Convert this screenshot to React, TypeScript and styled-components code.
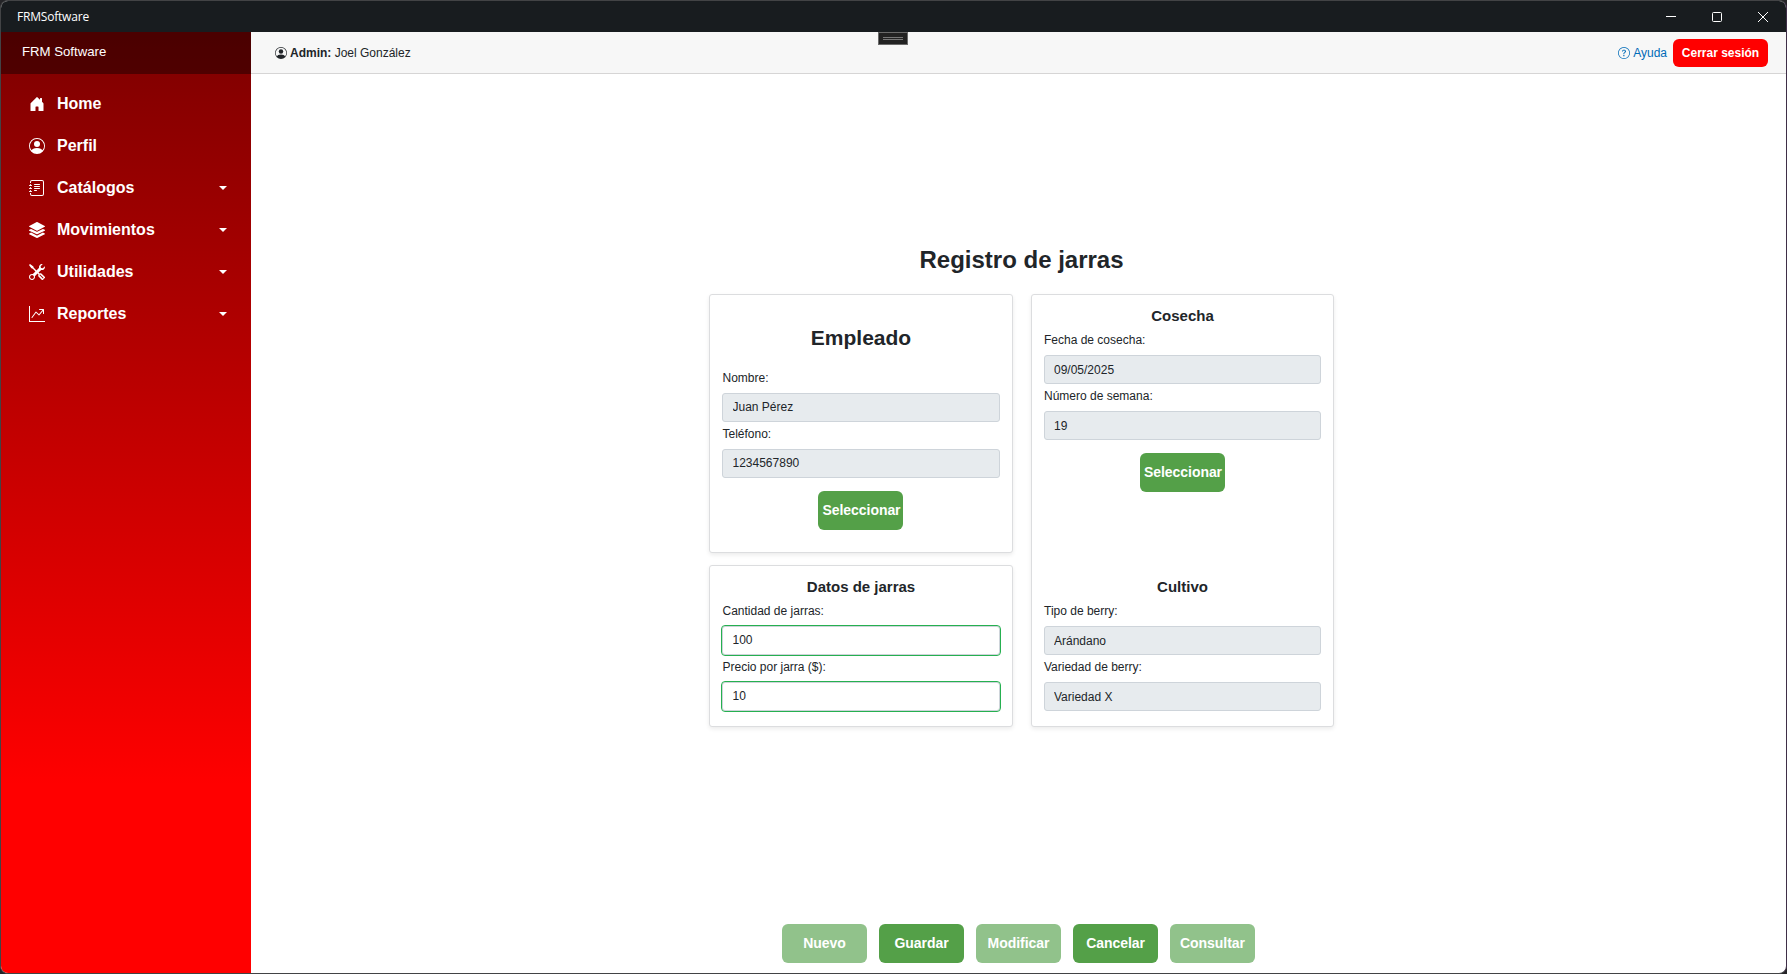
import React from "react";
import styled, { createGlobalStyle, css } from "styled-components";
import {
  BsHouseDoorFill,
  BsPersonCircle,
  BsJournalText,
  BsTools,
  BsGraphUpArrow,
  BsQuestionCircle,
} from "react-icons/bs";

const Global = createGlobalStyle`
  *, *::before, *::after { box-sizing: border-box; }
  html, body { margin: 0; height: 100%; overflow: hidden; background: #242427; }
  body { font: 12px/18px "Liberation Sans", Arial, sans-serif; color: #212529; }
  h1, h2, h3, p { margin: 0; }
  button, input { font-family: inherit; }
`;

const Window = styled.div`
  width: 100vw;
  height: 100vh;
  display: flex;
  flex-direction: column;
  border: 1px solid #424345;
  border-right-color: #3f2f48;
  border-radius: 8px;
  overflow: hidden;
  background: #fff;
`;

const TitleBar = styled.header`
  position: relative;
  flex: 0 0 31px;
  display: flex;
  align-items: center;
  justify-content: space-between;
  padding-left: 16px;
  background: #181c1f;
  color: #fff;
  font: 12px/16px "Open Sans", "Noto Sans", sans-serif;
`;

const AppTitle = styled.span`
  letter-spacing: -0.2px;
`;

const WindowControls = styled.div`
  display: flex;
  height: 100%;
`;

const ControlButton = styled.button`
  width: 46px;
  height: 31px;
  padding: 0;
  border: 0;
  display: flex;
  align-items: center;
  justify-content: center;
  background: transparent;
  color: #fff;
`;

const DebugHandle = styled.div`
  position: absolute;
  left: 877px;
  top: 31px;
  width: 30px;
  height: 13px;
  display: flex;
  flex-direction: column;
  align-items: center;
  justify-content: center;
  gap: 1px;
  border: 1px solid #6a6a6a;
  background: #222;
  z-index: 2;
`;

const HandleLine = styled.i`
  width: 20px;
  height: 1px;
  background: #777;
`;

const Body = styled.div`
  flex: 1;
  min-height: 0;
  display: flex;
`;

const Sidebar = styled.aside`
  flex: 0 0 250px;
  background: linear-gradient(180deg, #7d0000 0%, #ff0000 80%);
  color: #fff;
`;

const Brand = styled.div`
  height: 42px;
  padding: 0 0 2px 21px;
  display: flex;
  align-items: center;
  background: rgba(0, 0, 0, 0.4);
  font-size: 13.2px;
`;

const Nav = styled.nav`
  padding: 9px 24px 0 28px;
`;

const NavItem = styled.a`
  height: 42px;
  display: flex;
  align-items: center;
  font-size: 16px;
  font-weight: 700;
`;

const NavLabel = styled.span`
  flex: 1;
  margin-left: 12px;
`;

const Caret = styled.i`
  border: 4px solid transparent;
  border-top-color: #fff;
  border-bottom: 0;
`;

const Main = styled.main`
  flex: 1;
  display: flex;
  flex-direction: column;
  min-width: 0;
`;

const TopRow = styled.div`
  flex: 0 0 42px;
  display: flex;
  align-items: center;
  padding: 0 18px 0 24px;
  background: #f7f7f7;
  border-bottom: 1px solid #d6d5d5;
`;

const UserInfo = styled.div`
  display: flex;
  align-items: center;
  flex: 1;
  gap: 3px;
`;

const HelpLink = styled.a`
  display: flex;
  align-items: center;
  gap: 3px;
  margin-right: 6px;
  color: #006bb7;
`;

const LogoutButton = styled.button`
  width: 95px;
  height: 28px;
  padding: 0;
  border: 0;
  border-radius: 6px;
  background: #f00;
  color: #fff;
  font-size: 12px;
  font-weight: 700;
  white-space: nowrap;
`;

const Content = styled.section`
  flex: 1;
  min-height: 0;
  display: flex;
  flex-direction: column;
  align-items: center;
  justify-content: space-between;
  padding: 171px 0 10px;
`;

const Form = styled.div`
  width: 625px;
  margin-left: 6px;
`;

const PageTitle = styled.h1`
  text-align: center;
  font-size: 24px;
  line-height: 29px;
  margin-bottom: 20px;
`;

const Columns = styled.div`
  display: grid;
  grid-template-columns: 304px 303px;
  column-gap: 18px;
  height: 433px;
`;

const LeftColumn = styled.div`
  display: flex;
  flex-direction: column;
  gap: 12px;
`;

const Card = styled.section<{ $height: number }>`
  height: ${(p) => p.$height}px;
  padding: 12px;
  border: 1px solid #dcdddf;
  border-radius: 3px;
  background: #fff;
  box-shadow: 0 2px 4px rgba(0, 0, 0, 0.08);
  display: flex;
  flex-direction: column;
  justify-content: space-between;
`;

const Group = styled.div<{ $top?: number }>`
  padding-top: ${(p) => p.$top ?? 0}px;
  display: flex;
  flex-direction: column;
`;

const LargeHeading = styled.h2`
  text-align: center;
  font-size: 21px;
  line-height: 25px;
  margin-bottom: 19px;
`;

const Heading = styled.h3`
  text-align: center;
  font-size: 15px;
  line-height: 18px;
  margin-bottom: 6px;
`;

const FieldRow = styled.label`
  display: flex;
  flex-direction: column;
  gap: 6px;
  height: 56px;
`;

const FieldLabel = styled.span`
  line-height: 18px;

  ${LeftColumn} & {
    padding-left: 0.5px;
  }
`;

const Input = styled.input<{ $valid?: boolean }>`
  width: 100%;
  height: 29px;
  padding: 0 9px;
  border: 1px solid #ced4da;
  border-radius: 3px;
  background: #e7ebee;
  color: #212529;
  font-size: 12px;
  ${(p) =>
    p.$valid &&
    css`
      background: #fff;
      outline: 1px solid #26b050;
    `}

  ${LeftColumn} & {
    padding: 0 9px 1px 9.5px;
  }
`;

const Button = styled.button<{ $muted?: boolean }>`
  flex: none;
  width: 85px;
  height: 39px;
  padding: 0 0 2px;
  border: 0;
  border-radius: 6px;
  background: ${(p) => (p.$muted ? "#91c28b" : "#54a048")};
  color: #fff;
  font-size: 14px;
  font-weight: 700;
  letter-spacing: -0.05px;
  white-space: nowrap;
`;

const SelectButton = styled(Button)`
  align-self: center;
  margin-top: 10px;
  padding-left: 1px;
`;

const EmployeeSelectButton = styled(SelectButton)`
  margin-right: 1px;
  padding-left: 2px;
`;

const Actions = styled.div`
  display: flex;
  gap: 12px;
`;

const StackIcon = () => (
  <svg width="16" height="16" viewBox="0 0 16 16" fill="currentColor">
    <path d="M7.77.05a.5.5 0 0 1 .46 0l7.5 3.9a.5.5 0 0 1 0 .9l-7.5 3.9a.5.5 0 0 1-.46 0L.27 4.85a.5.5 0 0 1 0-.9z" />
    <path d="m2.1 6.9 5.2 2.7a1.5 1.5 0 0 0 1.4 0l5.2-2.7 1.83.95a.5.5 0 0 1 0 .9l-7.5 3.5a.5.5 0 0 1-.46 0l-7.5-3.5a.5.5 0 0 1 0-.9z" />
    <path d="m2.1 10.6 5.2 2.6a1.5 1.5 0 0 0 1.4 0l5.2-2.6 1.83.85a.5.5 0 0 1 0 .9l-7.5 3.6a.5.5 0 0 1-.46 0l-7.5-3.6a.5.5 0 0 1 0-.9z" />
  </svg>
);

const navigation = [
  { label: "Home", icon: <BsHouseDoorFill size={16} />, menu: false },
  { label: "Perfil", icon: <BsPersonCircle size={16} />, menu: false },
  { label: "Catálogos", icon: <BsJournalText size={16} />, menu: true },
  { label: "Movimientos", icon: <StackIcon />, menu: true },
  { label: "Utilidades", icon: <BsTools size={16} />, menu: true },
  { label: "Reportes", icon: <BsGraphUpArrow size={16} />, menu: true },
];

const actions = [
  { label: "Nuevo", muted: true },
  { label: "Guardar", muted: false },
  { label: "Modificar", muted: true },
  { label: "Cancelar", muted: false },
  { label: "Consultar", muted: true },
];

function Field({ label, value, valid }: { label: string; value: string; valid?: boolean }) {
  return (
    <FieldRow>
      <FieldLabel>{label}</FieldLabel>
      <Input readOnly value={value} $valid={valid} />
    </FieldRow>
  );
}

export default function App() {
  return (
    <>
      <Global />
      <Window>
        <TitleBar>
          <AppTitle>FRMSoftware</AppTitle>
          <WindowControls>
            <ControlButton aria-label="Minimizar">
              <svg width="10" height="10" stroke="currentColor" fill="none">
                <path d="M0 4.5h10" />
              </svg>
            </ControlButton>
            <ControlButton aria-label="Maximizar">
              <svg width="10" height="10" stroke="currentColor" fill="none">
                <rect x=".5" y=".5" width="9" height="9" rx="1" />
              </svg>
            </ControlButton>
            <ControlButton aria-label="Cerrar">
              <svg width="10" height="10" stroke="currentColor" fill="none">
                <path d="M0 0l10 10M10 0L0 10" />
              </svg>
            </ControlButton>
          </WindowControls>
          <DebugHandle>
            <HandleLine />
            <HandleLine />
          </DebugHandle>
        </TitleBar>
        <Body>
          <Sidebar>
            <Brand>FRM Software</Brand>
            <Nav>
              {navigation.map((item) => (
                <NavItem key={item.label}>
                  {item.icon}
                  <NavLabel>{item.label}</NavLabel>
                  {item.menu && <Caret />}
                </NavItem>
              ))}
            </Nav>
          </Sidebar>
          <Main>
            <TopRow>
              <UserInfo>
                <BsPersonCircle size={12} />
                <span>
                  <b>Admin:</b> Joel González
                </span>
              </UserInfo>
              <HelpLink>
                <BsQuestionCircle size={12} />
                Ayuda
              </HelpLink>
              <LogoutButton>Cerrar sesión</LogoutButton>
            </TopRow>
            <Content>
              <Form>
                <PageTitle>Registro de jarras</PageTitle>
                <Columns>
                  <LeftColumn>
                    <Card $height={259}>
                      <Group $top={18}>
                        <LargeHeading>Empleado</LargeHeading>
                        <Field label="Nombre:" value="Juan Pérez" />
                        <Field label="Teléfono:" value="1234567890" />
                        <EmployeeSelectButton>Seleccionar</EmployeeSelectButton>
                      </Group>
                    </Card>
                    <Card $height={162}>
                      <Group>
                        <Heading>Datos de jarras</Heading>
                        <Field label="Cantidad de jarras:" value="100" valid />
                        <Field label="Precio por jarra ($):" value="10" valid />
                      </Group>
                    </Card>
                  </LeftColumn>
                  <Card $height={433}>
                    <Group>
                      <Heading>Cosecha</Heading>
                      <Field label="Fecha de cosecha:" value="09/05/2025" />
                      <Field label="Número de semana:" value="19" />
                      <SelectButton>Seleccionar</SelectButton>
                    </Group>
                    <Group>
                      <Heading>Cultivo</Heading>
                      <Field label="Tipo de berry:" value="Arándano" />
                      <Field label="Variedad de berry:" value="Variedad X" />
                    </Group>
                  </Card>
                </Columns>
              </Form>
              <Actions>
                {actions.map((action) => (
                  <Button key={action.label} $muted={action.muted}>
                    {action.label}
                  </Button>
                ))}
              </Actions>
            </Content>
          </Main>
        </Body>
      </Window>
    </>
  );
}
